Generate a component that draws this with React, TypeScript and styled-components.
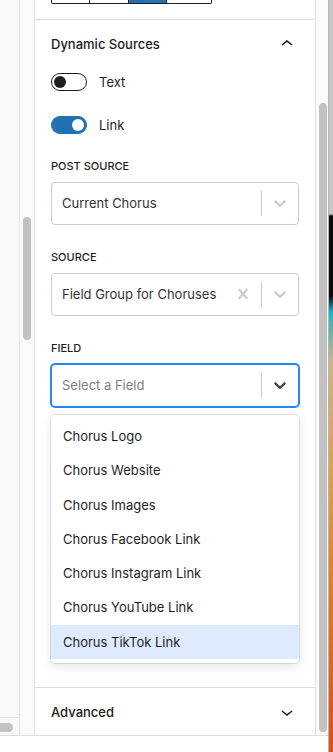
import styled, { createGlobalStyle } from "styled-components";

const GlobalStyle = createGlobalStyle`
  html, body {
    margin: 0;
    padding: 0;
    background: #fff;
  }
  body {
    font-family: Inter, "Noto Sans", "Liberation Sans", sans-serif;
    color: #1e1e1e;
    -webkit-font-smoothing: antialiased;
  }
  * { box-sizing: border-box; }
`;

const Screen = styled.div`
  display: flex;
  width: 333px;
  height: 752px;
  overflow: hidden;
`;

const MainCol = styled.div`
  display: flex;
  flex-direction: column;
  width: 328px;
`;

const Frame = styled.div`
  display: flex;
  height: 735px;
`;

const BottomBar = styled.div`
  height: 17px;
  border-top: 1px solid #e0e0e0;
  background: #fff;
`;

const Edge = styled.div`
  width: 5px;
  border-left: 1px solid #b4b4b4;
  background: linear-gradient(
    to bottom,
    #c6c6c6 0,
    #c6c6c6 214px,
    #0c0c0c 216px,
    #0c0c0c 296px,
    #1fb5c4 312px,
    #c9b48a 360px,
    #dfa04c 470px,
    #e07a22 600px,
    #d6511a 752px
  );
`;

const LeftPane = styled.div`
  width: 20px;
  display: flex;
  flex-direction: column;
  justify-content: flex-end;
  background: #f9f9f9;
  border-right: 1px solid #e2e2e2;
`;

const HScroll = styled.div`
  height: 18px;
  border-top: 1px solid #e2e2e2;
  padding-top: 5px;
`;

const HThumb = styled.div`
  width: 13px;
  height: 9px;
  border-radius: 0 5px 5px 0;
  background: #c2c2c2;
`;

const VTrack = styled.div<{ $width: number; $top: number; $height: number }>`
  width: ${(p) => p.$width}px;
  padding-left: 3px;
  padding-top: ${(p) => p.$top}px;
  background: #fafafa;
  border-right: ${(p) => (p.$width === 15 ? "1px solid #dedede" : "none")};
  &::before {
    content: "";
    display: block;
    width: 8px;
    height: ${(p) => p.$height}px;
    border-radius: 4px;
    background: #c2c2c2;
  }
`;

const Panel = styled.div`
  width: 281px;
  display: flex;
  flex-direction: column;
  background: #fff;
  border-right: 1px solid #e0e0e0;
`;

const TopSection = styled.div`
  height: 20px;
  padding: 0 16px;
  border-bottom: 1px solid #e0e0e0;
`;

const Segmented = styled.div`
  display: flex;
  width: 161px;
  height: 4px;
`;

const Segment = styled.div<{ $w: number; $active?: boolean }>`
  width: ${(p) => p.$w}px;
  border: 1px solid #1e1e1e;
  border-top: none;
  border-left-width: 0;
  background: ${(p) => (p.$active ? "#2271b1" : "#fff")};
  &:first-child {
    border-left-width: 1px;
    border-bottom-left-radius: 2px;
  }
  &:last-child {
    border-bottom-right-radius: 2px;
  }
`;

const Section = styled.div<{ $open?: boolean }>`
  border-bottom: ${(p) => (p.$open ? "1px solid #e0e0e0" : "none")};
`;

const SectionHeader = styled.div<{ $h: number }>`
  display: flex;
  align-items: center;
  justify-content: space-between;
  height: ${(p) => p.$h}px;
  padding: 0 16px;
  font-size: 13px;
  font-weight: 500;
  color: #1e1e1e;
`;

const SectionBody = styled.div`
  padding: 0 16px 24px;
`;

const ToggleRow = styled.div<{ $mt: number }>`
  display: flex;
  align-items: center;
  gap: 12px;
  margin-top: ${(p) => p.$mt}px;
  font-size: 13px;
  color: #1e1e1e;
`;

const Track = styled.span<{ $on?: boolean }>`
  position: relative;
  width: 36px;
  height: 18px;
  border-radius: 9px;
  border: 1px solid ${(p) => (p.$on ? "#2271b1" : "#1e1e1e")};
  background: ${(p) => (p.$on ? "#2271b1" : "#fff")};
  &::after {
    content: "";
    position: absolute;
    top: 2px;
    left: ${(p) => (p.$on ? "20px" : "2px")};
    width: 12px;
    height: 12px;
    border-radius: 50%;
    background: ${(p) => (p.$on ? "#fff" : "#1e1e1e")};
  }
`;

const Field = styled.div<{ $mt: number }>`
  margin-top: ${(p) => p.$mt}px;
`;

const Label = styled.div`
  font-size: 11px;
  font-weight: 500;
  line-height: 14px;
  text-transform: uppercase;
  color: #1e1e1e;
  margin-bottom: 9px;
`;

const Control = styled.div<{ $focused?: boolean }>`
  display: flex;
  align-items: center;
  height: 43px;
  border-radius: 4px;
  border: 1px solid ${(p) => (p.$focused ? "#2684ff" : "#cccccc")};
  box-shadow: ${(p) => (p.$focused ? "0 0 0 1px #2684ff" : "none")};
  background: #fff;
`;

const Value = styled.div<{ $placeholder?: boolean }>`
  flex: 1;
  padding: 2px 8px 2px 10px;
  font-size: 13px;
  color: ${(p) => (p.$placeholder ? "#808080" : "#333")};
  white-space: nowrap;
  overflow: hidden;
`;

const Indicator = styled.div<{ $dark?: boolean }>`
  display: flex;
  align-items: center;
  justify-content: center;
  width: 36px;
  height: 36px;
  color: ${(p) => (p.$dark ? "#444" : "#cccccc")};
`;

const Separator = styled.span`
  align-self: stretch;
  width: 1px;
  margin: 8px 0;
  background: #cccccc;
`;

const Menu = styled.div`
  margin-top: 8px;
  padding: 4px 0;
  border-radius: 4px;
  background: #fff;
  box-shadow: 0 0 0 1px rgba(0, 0, 0, 0.1), 0 4px 11px rgba(0, 0, 0, 0.1);
`;

const Option = styled.div<{ $focused?: boolean }>`
  padding: 8px 12px;
  line-height: 18.3px;
  font-size: 13px;
  color: #1e1e1e;
  background: ${(p) => (p.$focused ? "#deebff" : "transparent")};
`;

const Chevron = ({ up }: { up?: boolean }) => (
  <svg width="24" height="24" viewBox="0 0 24 24" fill="#1e1e1e">
    {up ? (
      <path d="M6.5 12.4L12 8l5.5 4.4-.9 1.2L12 10l-4.6 3.6-.9-1.2z" />
    ) : (
      <path d="M17.5 11.6L12 16l-5.5-4.4.9-1.2L12 14l4.6-3.6 1 1.2z" />
    )}
  </svg>
);

const DownArrow = () => (
  <svg width="20" height="20" viewBox="0 0 20 20" fill="currentColor">
    <path d="M4.516 7.548c0.436-0.446 1.043-0.481 1.576 0l3.908 3.747 3.908-3.747c0.533-0.481 1.141-0.446 1.574 0 0.436 0.445 0.408 1.197 0 1.615-0.406 0.418-4.695 4.502-4.695 4.502-0.217 0.223-0.502 0.335-0.787 0.335s-0.57-0.112-0.789-0.335c0 0-4.287-4.084-4.695-4.502s-0.436-1.170 0-1.615z" />
  </svg>
);

const Cross = () => (
  <svg width="20" height="20" viewBox="0 0 20 20" fill="currentColor">
    <path d="M14.348 14.849c-0.469 0.469-1.229 0.469-1.697 0l-2.651-3.030-2.651 3.029c-0.469 0.469-1.229 0.469-1.697 0-0.469-0.469-0.469-1.229 0-1.697l2.758-3.15-2.759-3.152c-0.469-0.469-0.469-1.228 0-1.697s1.228-0.469 1.697 0l2.652 3.031 2.651-3.031c0.469-0.469 1.228-0.469 1.697 0s0.469 1.229 0 1.697l-2.758 3.152 2.758 3.15c0.469 0.469 0.469 1.229 0 1.698z" />
  </svg>
);

const fieldOptions = [
  "Chorus Logo",
  "Chorus Website",
  "Chorus Images",
  "Chorus Facebook Link",
  "Chorus Instagram Link",
  "Chorus YouTube Link",
  "Chorus TikTok Link",
];

const App = () => {
  return (
    <Screen>
      <GlobalStyle />
      <MainCol>
        <Frame>
          <LeftPane>
            <HScroll>
              <HThumb />
            </HScroll>
          </LeftPane>
          <VTrack $width={15} $top={217} $height={123} />
          <Panel>
            <TopSection>
              <Segmented>
                <Segment $w={39} />
                <Segment $w={39} />
                <Segment $w={38} $active />
                <Segment $w={45} />
              </Segmented>
            </TopSection>

            <Section $open>
              <SectionHeader $h={48}>
                Dynamic Sources
                <Chevron up />
              </SectionHeader>
              <SectionBody>
                <ToggleRow $mt={5}>
                  <Track />
                  Text
                </ToggleRow>
                <ToggleRow $mt={25}>
                  <Track $on />
                  Link
                </ToggleRow>

                <Field $mt={25}>
                  <Label>Post Source</Label>
                  <Control>
                    <Value>Current Chorus</Value>
                    <Separator />
                    <Indicator>
                      <DownArrow />
                    </Indicator>
                  </Control>
                </Field>

                <Field $mt={25}>
                  <Label>Source</Label>
                  <Control>
                    <Value>Field Group for Choruses</Value>
                    <Indicator>
                      <Cross />
                    </Indicator>
                    <Separator />
                    <Indicator>
                      <DownArrow />
                    </Indicator>
                  </Control>
                </Field>

                <Field $mt={25}>
                  <Label>Field</Label>
                  <Control $focused>
                    <Value $placeholder>Select a Field</Value>
                    <Separator />
                    <Indicator $dark>
                      <DownArrow />
                    </Indicator>
                  </Control>
                  <Menu>
                    {fieldOptions.map((o, i) => (
                      <Option key={o} $focused={i === fieldOptions.length - 1}>
                        {o}
                      </Option>
                    ))}
                  </Menu>
                </Field>
              </SectionBody>
            </Section>

            <Section>
              <SectionHeader $h={47}>
                Advanced
                <Chevron />
              </SectionHeader>
            </Section>
          </Panel>
          <VTrack $width={12} $top={103} $height={629} />
        </Frame>
        <BottomBar />
      </MainCol>
      <Edge />
    </Screen>
  );
};

export default App;
